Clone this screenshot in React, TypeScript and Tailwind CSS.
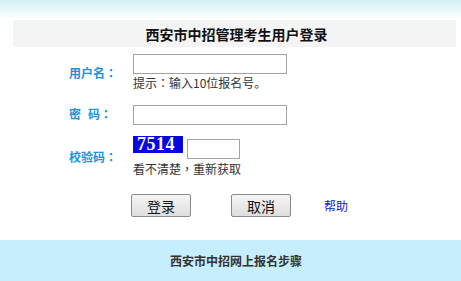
import React from "react";

const font = { fontFamily: '"Noto Sans CJK SC", "Noto Sans", sans-serif' };
const tc = { fontFamily: '"Noto Sans CJK TC", "Noto Sans CJK SC", sans-serif' };

function P({ c }: { c: string }) {
  return <span style={tc}>{c}</span>;
}

export default function App() {
  return (
    <div className="w-[461px] h-[281px] bg-white overflow-hidden flex flex-col" style={font}>
      <div className="h-[20px] bg-gradient-to-b from-[#d2f0f4] via-[#f4fbfc] via-70% to-white" />
      <div className="ml-[13px] mr-[5px] h-[27px] bg-[#f4f4f4] flex items-center justify-center pl-[4px]">
        <span className="text-[14px] leading-[16px] font-bold text-[#111]">西安市中招管理考生用户登录</span>
      </div>

      {/* Row 1 */}
      <div className="mt-[7px] flex items-center">
        <div className="ml-[69px] w-[48px] text-[12px] leading-[14px] font-bold text-[#2290de] whitespace-nowrap">
          用户名<P c="：" />
        </div>
        <div className="ml-[16px] flex flex-col">
          <div className="w-[154px] h-[20px] border border-[#a3a3a3] bg-white" />
          <div className="text-[12px] leading-[18px] text-[#333] whitespace-nowrap">
            提示<P c="：" />输入10位报名号。
          </div>
        </div>
      </div>

      {/* Row 2 */}
      <div className="mt-[13px] flex items-center">
        <div className="ml-[69px] w-[48px] text-[12px] leading-[14px] font-bold text-[#2290de] whitespace-nowrap pb-[3px] flex">
          <span>密</span>
          <span className="w-[7px]" />
          <span>码</span>
          <P c="：" />
        </div>
        <div className="ml-[16px] w-[154px] h-[20px] border border-[#a3a3a3] bg-white" />
      </div>

      {/* Row 3 */}
      <div className="mt-[11px] flex items-center">
        <div className="ml-[69px] w-[48px] text-[12px] leading-[14px] font-bold text-[#2290de] whitespace-nowrap">
          校验码<P c="：" />
        </div>
        <div className="ml-[16px] flex flex-col">
          <div className="flex items-start">
            <div
              className="w-[50px] h-[17px] bg-[#0808dc] text-[#f4f4ff] font-bold text-[18px] leading-[17px] pl-[4px] tracking-[0.5px]"
              style={{ fontFamily: '"Liberation Serif", serif' }}
            >
              7514
            </div>
            <div className="ml-[4px] mt-[3px] w-[53px] h-[20px] border border-[#a3a3a3] bg-white" />
          </div>
          <div className="mt-[1px] text-[12px] leading-[18px] text-[#333] whitespace-nowrap">
            看不清楚<P c="，" />重新获取
          </div>
        </div>
      </div>

      {/* Buttons */}
      <div className="mt-[16px] flex items-center">
        <button className="ml-[131px] w-[60px] h-[23px] border border-[#8a8a8a] rounded-[2px] bg-gradient-to-b from-[#f6f6f6] to-[#dedede] text-[14px] leading-[20px] text-[#111]">
          登录
        </button>
        <button className="ml-[40px] w-[60px] h-[23px] border border-[#8a8a8a] rounded-[2px] bg-gradient-to-b from-[#f6f6f6] to-[#dedede] text-[14px] leading-[20px] text-[#111]">
          取消
        </button>
        <span className="ml-[33px] text-[12px] leading-[14px] text-[#1515c8]">帮助</span>
      </div>

      {/* Bottom band */}
      <div className="mt-[23px] h-[41px] bg-[#c6eefc] flex items-center">
        <span className="ml-[170px] text-[12px] leading-[14px] font-bold text-[#333]">西安市中招网上报名步骤</span>
      </div>
    </div>
  );
}
